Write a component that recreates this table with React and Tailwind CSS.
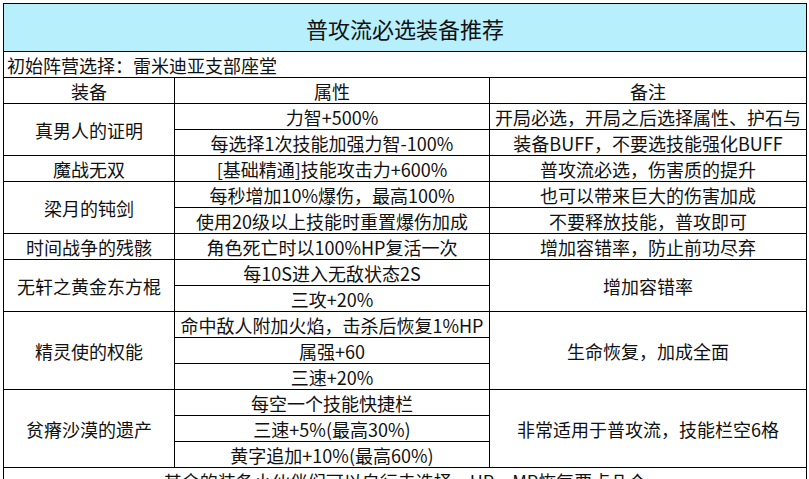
const rows = [
  { name: '真男人的证明', attrs: ['力智+500%', '每选择1次技能加强力智-100%'], note: '开局必选，开局之后选择属性、护石与|装备BUFF，不要选技能强化BUFF', split: true },
  { name: '魔战无双', attrs: ['[基础精通]技能攻击力+600%'], note: '普攻流必选，伤害质的提升' },
  { name: '梁月的钝剑', attrs: ['每秒增加10%爆伤，最高100%', '使用20级以上技能时重置爆伤加成'], notes: ['也可以带来巨大的伤害加成', '不要释放技能，普攻即可'] },
  { name: '时间战争的残骸', attrs: ['角色死亡时以100%HP复活一次'], note: '增加容错率，防止前功尽弃' },
  { name: '无轩之黄金东方棍', attrs: ['每10S进入无敌状态2S', '三攻+20%'], note: '增加容错率' },
  { name: '精灵使的权能', attrs: ['命中敌人附加火焰，击杀后恢复1%HP', '属强+60', '三速+20%'], note: '生命恢复，加成全面' },
  { name: '贫瘠沙漠的遗产', attrs: ['每空一个技能快捷栏', '三速+5%(最高30%)', '黄字追加+10%(最高60%)'], note: '非常适用于普攻流，技能栏空6格' },
]

const cell = 'border border-black p-0 text-center align-middle whitespace-nowrap h-[26px] leading-none'

export default function App() {
  return (
    <div className="w-[809px] h-[479px] overflow-hidden bg-white pl-[3px] pt-[3px] text-[18px] text-[#111]" style={{ fontFamily: '"Noto Sans CJK SC", "Noto Sans", sans-serif' }}>
      <table className="border-collapse table-fixed w-[803px]">
        <colgroup>
          <col className="w-[171px]" />
          <col className="w-[315px]" />
          <col className="w-[317px]" />
        </colgroup>
        <tbody>
          <tr>
            <td colSpan={3} className="border border-black bg-[#b7effc] h-[48px] text-center text-[22px] leading-none align-middle">普攻流必选装备推荐</td>
          </tr>
          <tr>
            <td colSpan={3} className="border border-black h-[26px] pl-[3px] leading-none align-middle">初始阵营选择：雷米迪亚支部座堂</td>
          </tr>
          <tr>
            <td className={cell}>装备</td>
            <td className={cell}>属性</td>
            <td className={cell}>备注</td>
          </tr>
          {rows.map((r) =>
            r.attrs.map((a, i) => (
              <tr key={r.name + i}>
                {i === 0 && <td rowSpan={r.attrs.length} className={cell}>{r.name}</td>}
                <td className={cell}>{a}</td>
                {r.notes ? (
                  <td className={cell}>{r.notes[i]}</td>
                ) : r.split ? (
                  <td className={cell}>{r.note.split('|')[i]}</td>
                ) : (
                  i === 0 && <td rowSpan={r.attrs.length} className={cell}>{r.note}</td>
                )}
              </tr>
            ))
          )}
          <tr>
            <td colSpan={3} className={cell}>其余的装备小伙伴们可以自行去选择，HP、MP恢复要点几个</td>
          </tr>
        </tbody>
      </table>
    </div>
  )
}
